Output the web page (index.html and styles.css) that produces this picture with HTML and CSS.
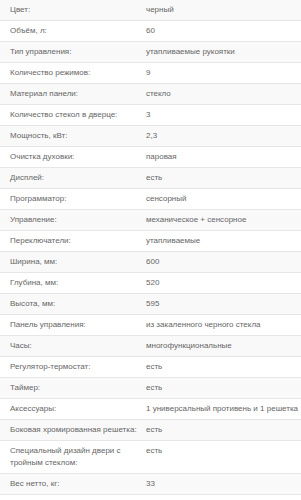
FILE: index.html
```html
<!DOCTYPE html>
<html lang="ru">
<head>
<meta charset="utf-8">
<link rel="stylesheet" href="styles.css">
</head>
<body>
<div class="specs">
  <div class="row"><div class="k">Цвет:</div><div class="v">черный</div></div>
  <div class="row"><div class="k">Объём, л:</div><div class="v">60</div></div>
  <div class="row"><div class="k">Тип управления:</div><div class="v">утапливаемые рукоятки</div></div>
  <div class="row"><div class="k">Количество режимов:</div><div class="v">9</div></div>
  <div class="row"><div class="k">Материал панели:</div><div class="v">стекло</div></div>
  <div class="row"><div class="k">Количество стекол в дверце:</div><div class="v">3</div></div>
  <div class="row"><div class="k">Мощность, кВт:</div><div class="v">2,3</div></div>
  <div class="row"><div class="k">Очистка духовки:</div><div class="v">паровая</div></div>
  <div class="row"><div class="k">Дисплей:</div><div class="v">есть</div></div>
  <div class="row"><div class="k">Программатор:</div><div class="v">сенсорный</div></div>
  <div class="row"><div class="k">Управление:</div><div class="v">механическое + сенсорное</div></div>
  <div class="row"><div class="k">Переключатели:</div><div class="v">утапливаемые</div></div>
  <div class="row"><div class="k">Ширина, мм:</div><div class="v">600</div></div>
  <div class="row"><div class="k">Глубина, мм:</div><div class="v">520</div></div>
  <div class="row"><div class="k">Высота, мм:</div><div class="v">595</div></div>
  <div class="row"><div class="k">Панель управления:</div><div class="v">из закаленного черного стекла</div></div>
  <div class="row"><div class="k">Часы:</div><div class="v">многофункциональные</div></div>
  <div class="row"><div class="k">Регулятор-термостат:</div><div class="v">есть</div></div>
  <div class="row"><div class="k">Таймер:</div><div class="v">есть</div></div>
  <div class="row"><div class="k">Аксессуары:</div><div class="v">1 универсальный противень и 1 решетка</div></div>
  <div class="row"><div class="k">Боковая хромированная решетка:</div><div class="v">есть</div></div>
  <div class="row"><div class="k">Специальный дизайн двери с тройным стеклом:</div><div class="v">есть</div></div>
  <div class="row"><div class="k">Вес нетто, кг:</div><div class="v">33</div></div>
</div>
</body>
</html>
```
FILE: styles.css
```css
html, body {
  margin: 0;
  padding: 0;
  background: #fff;
}
.specs {
  font-family: "Liberation Sans", Arial, sans-serif;
  font-size: 8px;
  line-height: 12px;
  color: #666;
}
.row {
  display: grid;
  grid-template-columns: 146px 1fr;
  border-bottom: 1px solid #e6e6e6;
}
.row:nth-child(odd) {
  background: #f9f9f9;
}
.k {
  padding: 4px 4px 4px 10px;
}
.v {
  padding: 4px 4px 4px 0;
  white-space: nowrap;
}
```
